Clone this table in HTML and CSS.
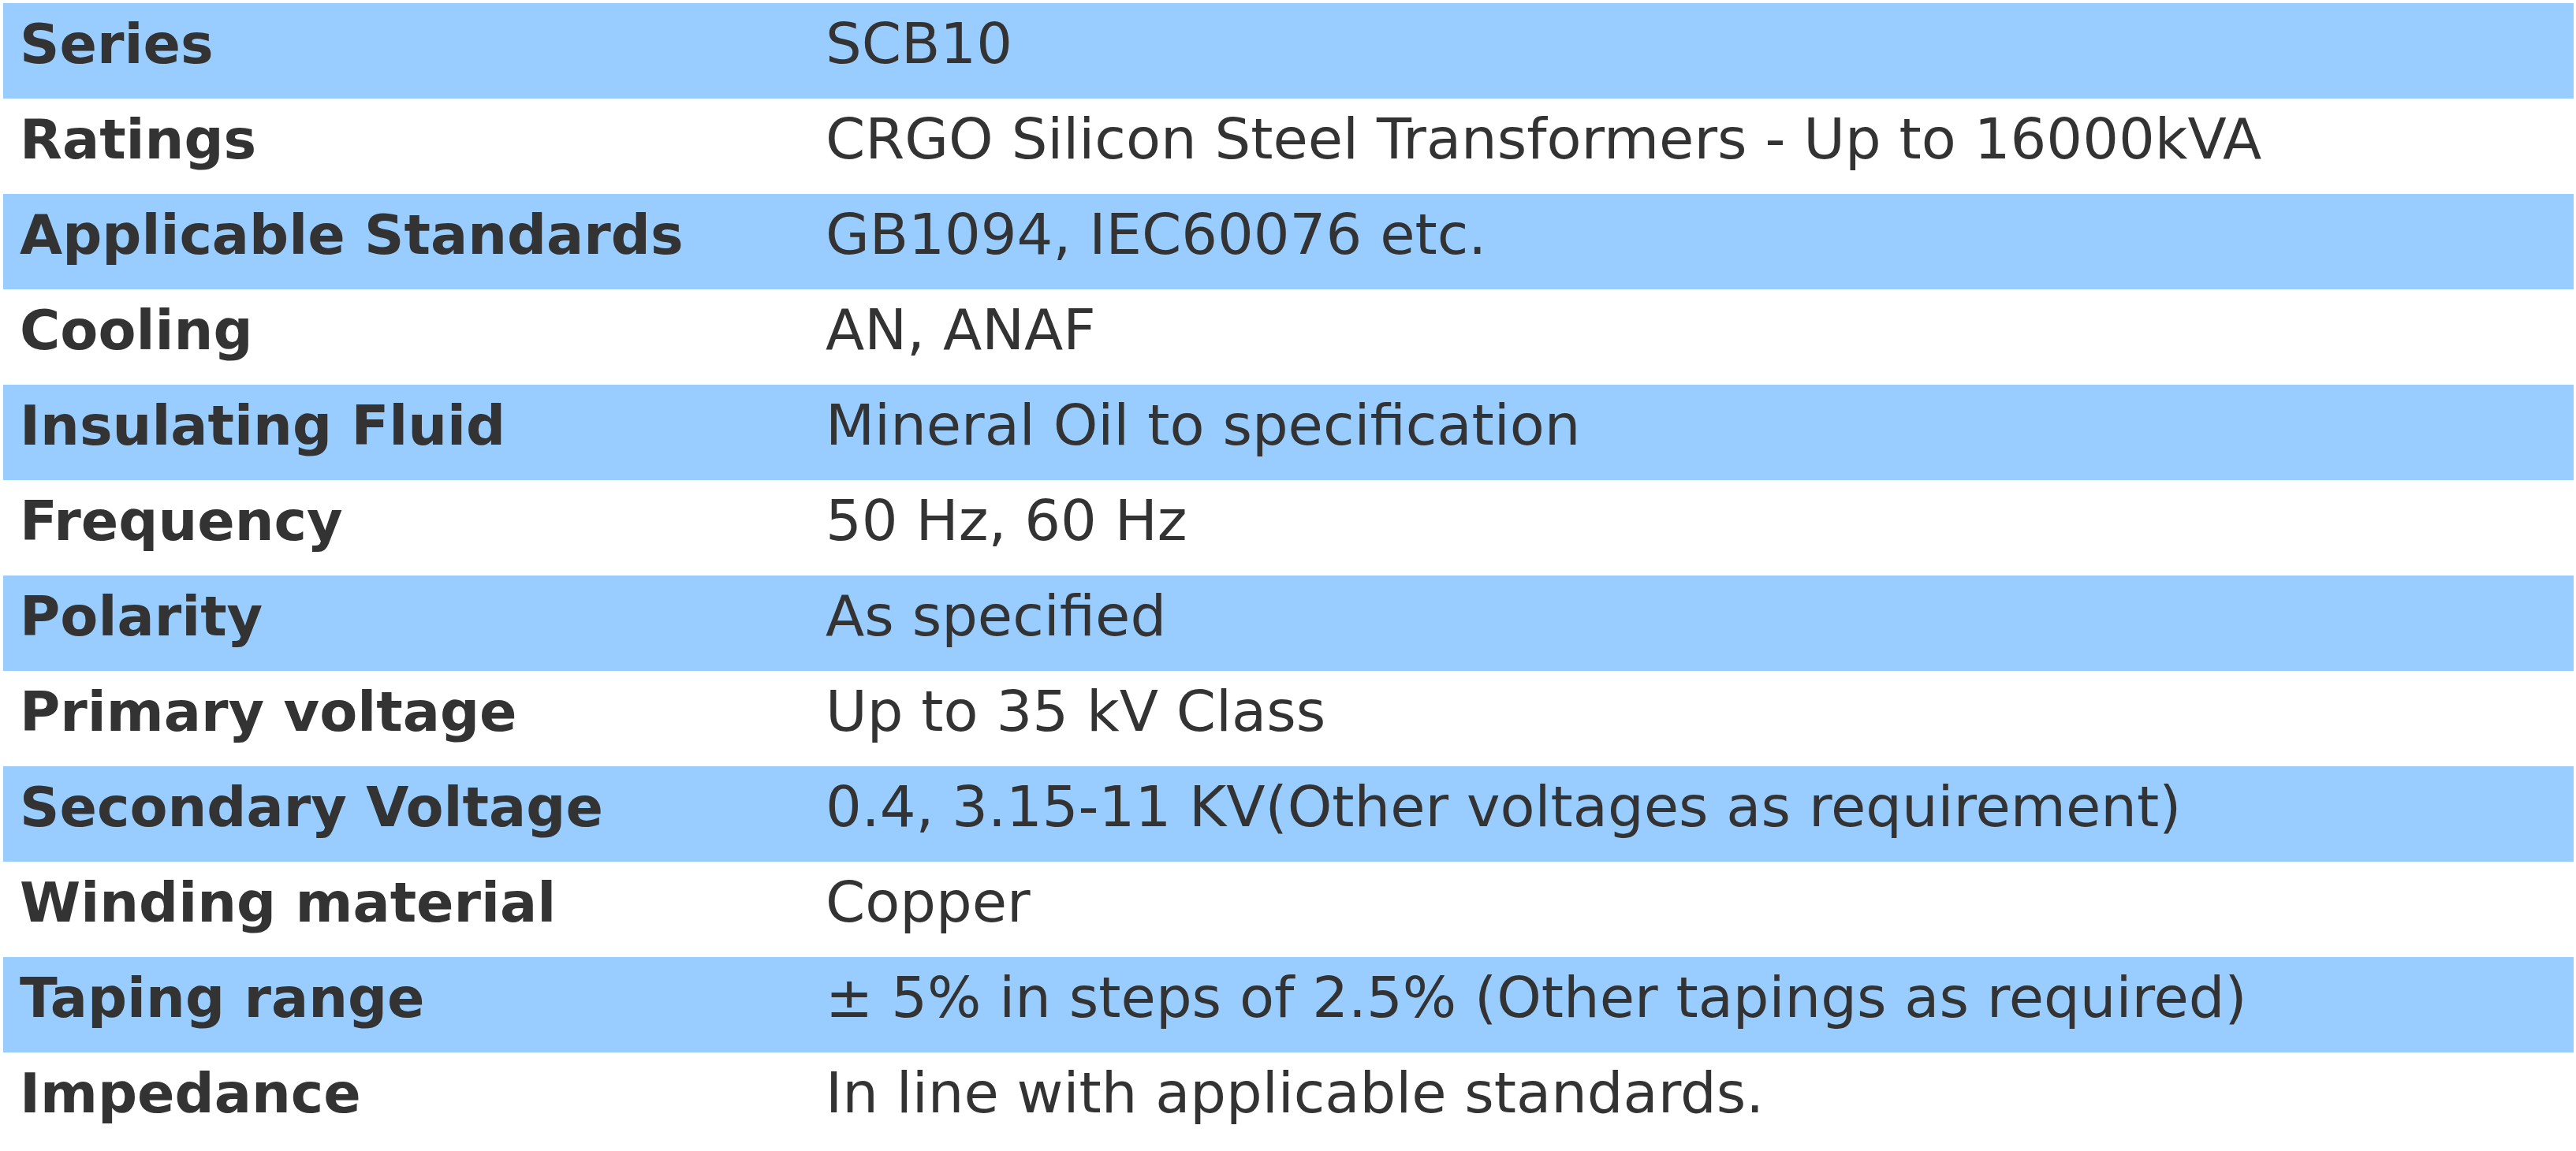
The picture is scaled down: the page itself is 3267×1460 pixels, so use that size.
FILE: index.html
```html
<!DOCTYPE html>
<html lang="en">
<head>
<meta charset="utf-8">
<title>SCB10 Specifications</title>
<link rel="stylesheet" href="styles.css">
</head>
<body>
<div class="spec">
  <div class="row alt"><div class="label">Series</div><div class="value">SCB10</div></div>
  <div class="row"><div class="label">Ratings</div><div class="value">CRGO Silicon Steel Transformers - Up to 16000kVA</div></div>
  <div class="row alt"><div class="label">Applicable Standards</div><div class="value">GB1094, IEC60076 etc.</div></div>
  <div class="row"><div class="label">Cooling</div><div class="value">AN, ANAF</div></div>
  <div class="row alt"><div class="label">Insulating Fluid</div><div class="value">Mineral Oil to specification</div></div>
  <div class="row"><div class="label">Frequency</div><div class="value">50 Hz, 60 Hz</div></div>
  <div class="row alt"><div class="label">Polarity</div><div class="value">As specified</div></div>
  <div class="row"><div class="label">Primary voltage</div><div class="value">Up to 35 kV Class</div></div>
  <div class="row alt"><div class="label">Secondary Voltage</div><div class="value">0.4, 3.15-11 KV(Other voltages as requirement)</div></div>
  <div class="row"><div class="label">Winding material</div><div class="value">Copper</div></div>
  <div class="row alt"><div class="label">Taping range</div><div class="value">± 5% in steps of 2.5% (Other tapings as required)</div></div>
  <div class="row"><div class="label">Impedance</div><div class="value">In line with applicable standards.</div></div>
</div>
</body>
</html>
```

FILE: styles.css
```css
html, body {
  margin: 0;
  padding: 0;
  background: #ffffff;
}

body {
  font-family: "DejaVu Sans", Verdana, sans-serif;
  color: #333333;
}

.spec {
  padding: 4px 3px 0 4px;
  display: flex;
  flex-direction: column;
}

.row {
  display: grid;
  grid-template-columns: 1022px 1fr;
  align-items: baseline;
  height: 121px;
  box-sizing: border-box;
  padding-top: 8px;
  line-height: 86px;
  background: #ffffff;
}

.row.alt {
  background: #99ccff;
}

.label {
  padding-left: 21px;
  font-weight: bold;
  font-size: 70px;
}

.value {
  padding-left: 21px;
  font-size: 72px;
}
```
